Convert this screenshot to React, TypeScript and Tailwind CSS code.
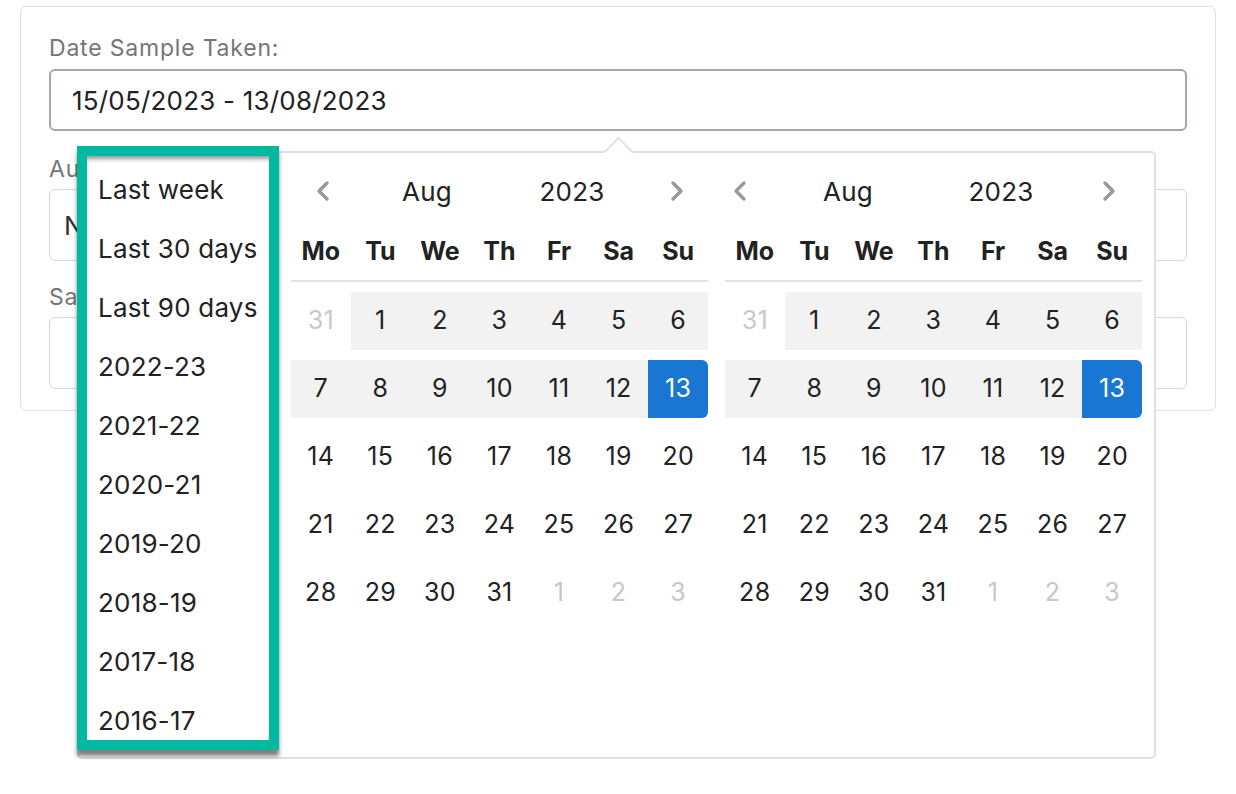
import React from 'react'

type Day = { n: number; off?: boolean; inRange?: boolean; end?: boolean }

const WEEKS: Day[][] = [
  [{ n: 31, off: true }, { n: 1, inRange: true }, { n: 2, inRange: true }, { n: 3, inRange: true }, { n: 4, inRange: true }, { n: 5, inRange: true }, { n: 6, inRange: true }],
  [{ n: 7, inRange: true }, { n: 8, inRange: true }, { n: 9, inRange: true }, { n: 10, inRange: true }, { n: 11, inRange: true }, { n: 12, inRange: true }, { n: 13, end: true }],
  [{ n: 14 }, { n: 15 }, { n: 16 }, { n: 17 }, { n: 18 }, { n: 19 }, { n: 20 }],
  [{ n: 21 }, { n: 22 }, { n: 23 }, { n: 24 }, { n: 25 }, { n: 26 }, { n: 27 }],
  [{ n: 28 }, { n: 29 }, { n: 30 }, { n: 31 }, { n: 1, off: true }, { n: 2, off: true }, { n: 3, off: true }],
]

const DAYS = ['Mo', 'Tu', 'We', 'Th', 'Fr', 'Sa', 'Su']

const RANGES = ['Last week', 'Last 30 days', 'Last 90 days', '2022-23', '2021-22', '2020-21', '2019-20', '2018-19', '2017-18', '2016-17']

function Chevron({ dir }: { dir: 'l' | 'r' }) {
  return (
    <svg width="16" height="22" viewBox="0 0 16 22" fill="none">
      <path
        d={dir === 'l' ? 'M12 3 L4 11 L12 19' : 'M4 3 L12 11 L4 19'}
        stroke="#999"
        strokeWidth="3.4"
        strokeLinecap="round"
        strokeLinejoin="round"
      />
    </svg>
  )
}

function Calendar({ right }: { right?: boolean }) {
  return (
    <div className="w-[417px] shrink-0">
      {/* month / year header */}
      {right ? (
        <div className="flex h-[40px] items-center text-[26px] tracking-[0.2px] text-[#222]">
          <div className="flex w-[30px] justify-center"><Chevron dir="l" /></div>
          <div className="w-[186px] text-center">Aug</div>
          <div className="w-[120px] text-center">2023</div>
          <div className="flex-1" />
          <div className="flex w-[66px] justify-center"><Chevron dir="r" /></div>
        </div>
      ) : (
        <div className="flex h-[40px] items-center text-[26px] tracking-[0.2px] text-[#222]">
          <div className="flex w-[64px] justify-center"><Chevron dir="l" /></div>
          <div className="w-[144px] text-center">Aug</div>
          <div className="w-[146px] text-center">2023</div>
          <div className="flex w-[63px] justify-center"><Chevron dir="r" /></div>
        </div>
      )}

      <div className="mt-[9px] grid h-[62px] grid-cols-7 items-center border-b-2 border-[#e2e2e2] pt-[3px] text-[25px] font-bold text-[#222]">
        {DAYS.map((d) => (
          <div key={d} className="text-center">{d}</div>
        ))}
      </div>

      {WEEKS.map((w, i) => (
        <div key={i} className="mt-[10px] grid h-[58px] grid-cols-7 text-[25px] tracking-[0.3px]">
          {w.map((d, j) => (
            <div
              key={j}
              className={
                'flex items-center justify-center ' +
                (d.end
                  ? 'rounded-r-[6px] bg-[#1976d2] text-white'
                  : d.inRange
                  ? 'bg-[#f2f2f2] text-[#222]'
                  : d.off
                  ? 'text-[#c4c8cf]'
                  : 'text-[#222]')
              }
            >
              {d.n}
            </div>
          ))}
        </div>
      ))}
    </div>
  )
}

export default function App() {
  return (
    <div className="relative h-[794px] w-full bg-white font-['Inter',sans-serif]">
      <div className="mx-[20px] pt-[6px]">
        <div className="rounded-[6px] border border-[#e0e0e0] px-[28px] pt-[29px] pb-[21px]">
          <div className="h-[24px] text-[23px] leading-[24px] tracking-[0.8px] text-[#757575]">Date Sample Taken:</div>
          <div className="mt-[9px] flex h-[62px] items-center rounded-[6px] border-2 border-[#a3a7ae] px-[21px] text-[26px] tracking-[0.2px] text-[#222]">
            15/05/2023 - 13/08/2023
          </div>

          <div className="mt-[26px] h-[24px] text-[23px] leading-[24px] tracking-[0.8px] text-[#757575]">Authority:</div>
          <div className="mt-[8px] flex h-[72px] items-center rounded-[6px] border border-[#d4d7dc] px-[14px] text-[26px] text-[#333]">
            None selected
          </div>

          <div className="mt-[24px] h-[24px] text-[23px] leading-[24px] tracking-[0.8px] text-[#757575]">Sample Type:</div>
          <div className="mt-[8px] h-[72px] rounded-[6px] border border-[#d4d7dc]" />
        </div>
      </div>

      {/* date range picker popup */}
      <div className="absolute left-[77px] top-[151px] h-[608px] w-[1079px] rounded-[5px] border-2 border-[#e0e0e0] bg-white">
        <div className="absolute -top-[12px] left-[529px] h-[21px] w-[21px] rotate-45 border-l-2 border-t-2 border-[#e0e0e0] bg-white" />
        <div className="relative flex items-start">
          <div className="-ml-[2px] -mt-[7px] h-[604px] w-[202px] shrink-0 border-[10px] border-[#00b9a0] shadow-[0_6px_4px_rgba(0,0,0,0.5)]">
            <div className="h-full overflow-hidden bg-white pt-[4px] shadow-[inset_0_5px_4px_-2px_rgba(0,0,0,0.4)]">
              {RANGES.map((r) => (
                <div key={r} className="flex h-[59px] items-center pl-[11px] text-[26px] tracking-[0.2px] text-[#222]">
                  {r}
                </div>
              ))}
            </div>
          </div>
          <div className="ml-[12px] flex gap-[17px] pt-[18px]">
            <Calendar />
            <Calendar right />
          </div>
        </div>
      </div>
    </div>
  )
}
